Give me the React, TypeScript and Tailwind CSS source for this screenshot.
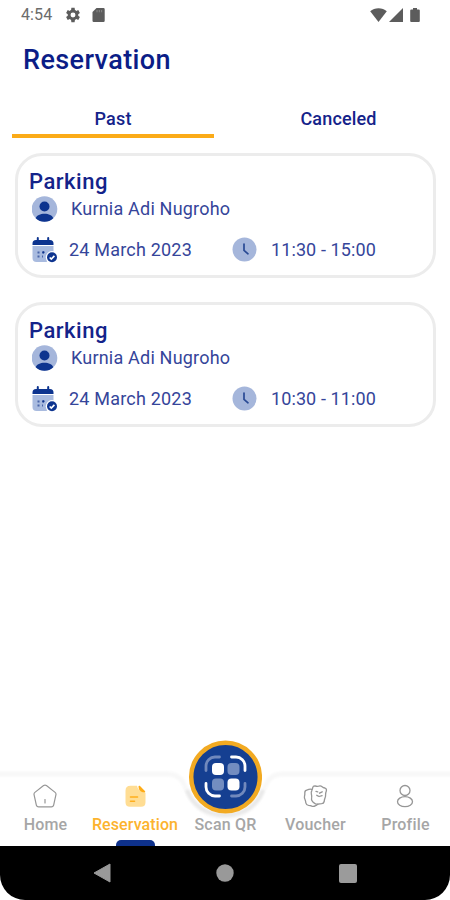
import type { ReactNode } from 'react';

interface Booking {
  id: number;
  title: string;
  name: string;
  date: string;
  time: string;
}

const bookings: Booking[] = [
  { id: 1, title: 'Parking', name: 'Kurnia Adi Nugroho', date: '24 March 2023', time: '11:30 - 15:00' },
  { id: 2, title: 'Parking', name: 'Kurnia Adi Nugroho', date: '24 March 2023', time: '10:30 - 11:00' },
];

function StatusBar() {
  return (
    <div className="flex h-[30px] items-center pl-[21px] pr-[30px] text-[#5c5c5c]">
      <span className="w-[44px] text-[16px] leading-[30px] tracking-[0.1px] text-[#6c6c6c]">4:54</span>
      <svg width="16" height="16" viewBox="2.900 2 20 20" fill="currentColor">
        <path
          fillRule="evenodd"
          d="M19.400 13a7.500 7.500 0 0 0 0-2l2.100-1.600-2-3.500-2.500 1a7.300 7.300 0 0 0-1.700-1L14.900 2.800h-4l-.4 3.100a7.300 7.300 0 0 0-1.700 1l-2.500-1-2 3.500L6.400 11a7.500 7.500 0 0 0 0 2l-2.100 1.600 2 3.500 2.500-1a7.300 7.300 0 0 0 1.700 1l.4 3.100h4l.4-3.100a7.300 7.300 0 0 0 1.700-1l2.500 1 2-3.500zM12.900 15.100a3.100 3.100 0 1 1 0-6.200 3.100 3.100 0 0 1 0 6.200z"
        />
      </svg>
      <svg className="ml-[11px]" width="13" height="14" viewBox="0 0 13 14" fill="currentColor">
        <path d="M4.500 0H11.500A1.200 1.200 0 0 1 12.700 1.200V12.800A1.200 1.200 0 0 1 11.500 14H1.700A1.200 1.200 0 0 1 .5 12.800V4z" />
        <path d="M5 2v2.300M7.300 2v2.300M9.600 2v2.300" stroke="#888" strokeWidth="1" />
      </svg>
      <div className="ml-auto flex items-center">
        <svg width="17" height="14" viewBox="0 0 17 14" fill="currentColor">
          <path d="M8.500 14 .2 3.300C2.500 1.400 5.300.3 8.500.3s6 1.100 8.300 3z" />
        </svg>
        <svg className="ml-[2px]" width="14" height="14" viewBox="0 0 14 14" fill="currentColor">
          <path d="M14 0v14H0z" />
        </svg>
        <svg className="ml-[7px]" width="10" height="14" viewBox="0 0 10 14" fill="currentColor">
          <path d="M3 0h4v1.500h1.800a1 1 0 0 1 1 1V13a1 1 0 0 1-1 1H1.200a1 1 0 0 1-1-1V2.500a1 1 0 0 1 1-1H3z" />
        </svg>
      </div>
    </div>
  );
}

function PersonIcon() {
  return (
    <svg width="26" height="26" viewBox="0 0 26 26">
      <circle cx="12.500" cy="13" r="12.800" fill="#a5b6db" />
      <circle cx="12.500" cy="10.500" r="5" fill="#0d348f" />
      <path d="M3.700 22.300C4.700 19.200 8.300 17.700 12.500 17.700s7.800 1.500 8.800 4.600a12.800 12.800 0 0 1-17.600 0z" fill="#0d348f" />
    </svg>
  );
}

function CalendarIcon() {
  return (
    <svg width="26" height="27" viewBox="0 0 26 27">
      <path d="M.5 10h21v9l-7 7h-10a4 4 0 0 1-4-4z" fill="#a9bbdf" />
      <path d="M.5 9V7.500A3.500 3.500 0 0 1 4 4h14a3.500 3.500 0 0 1 3.500 3.500V9z" fill="#0d348f" />
      <path d="M5.800 2v4M16.200 2v4" stroke="#0d348f" strokeWidth="2" strokeLinecap="round" />
      <path d="M5.500 16.500h2M10 16.500h2M5.500 20.500h2M10 20.500h1" stroke="#4964a8" strokeWidth="1.800" />
      <circle cx="11.500" cy="16.300" r="1.100" fill="#0d348f" />
      <circle cx="20" cy="21.300" r="6.200" fill="#fff" />
      <circle cx="20" cy="21.300" r="5" fill="#0d348f" />
      <path d="m17.700 21.500 1.600 1.500 3.100-3.100" fill="none" stroke="#fff" strokeWidth="1.700" />
    </svg>
  );
}

function ClockIcon() {
  return (
    <svg className="mt-[1px]" width="25" height="25" viewBox="0 0 25 25">
      <circle cx="12.500" cy="12.500" r="12" fill="#a5b6db" />
      <path d="M12 7v6.300l4 3.500" fill="none" stroke="#284994" strokeWidth="1.700" strokeLinecap="round" />
    </svg>
  );
}

function BookingCard({ booking }: { booking: Booking }) {
  return (
    <div className="h-[125px] rounded-[27px] border-[3px] border-[#ececec] bg-white pl-[11px] pt-[12px] text-[#35459a]">
      <h2 className="text-[22px] font-medium leading-[27px] tracking-[0.5px] text-[#14238a]">{booking.title}</h2>
      <div className="flex h-[27px] items-center pl-[3px]">
        <PersonIcon />
        <span className="ml-[13px] text-[18px] tracking-[0.2px]">{booking.name}</span>
      </div>
      <div className="mt-[13px] flex h-[28px] items-center pl-[3px]">
        <CalendarIcon />
        <span className="ml-[11px] w-[163px] text-[18px] tracking-[0.2px]">{booking.date}</span>
        <ClockIcon />
        <span className="ml-[14px] text-[18px] tracking-[0.1px]">{booking.time}</span>
      </div>
    </div>
  );
}

function HomeIcon() {
  return (
    <svg width="26" height="26" viewBox="0 0 26 26" fill="none" stroke="#969696" strokeWidth="1.200" strokeLinejoin="round" strokeLinecap="round">
      <path d="M11.600 1.500q1.400-.9 2.800 0l8.700 6.900q1.200 1 .8 2.500l-2.300 10.400q-.5 1.600-2.200 1.600H6.600q-1.700 0-2.200-1.600L2.100 10.900q-.4-1.500.8-2.500z" />
      <path d="M13 15.500v3.500" />
    </svg>
  );
}

function NoteIcon() {
  return (
    <svg width="26" height="26" viewBox="0 0 26 26">
      <path d="M8.500 1.800h6.500q.8 5.800 8.500 7V18.300q0 4.500-4.500 4.500H8Q3.500 22.800 3.500 18.300V6.800q0-5 5-5z" fill="#ffdd94" />
      <path d="M16.500 2.500c0-.9.9-1.100 1.500-.5l4.900 5c.7.700.3 1.500-.6 1.400-3.300-.1-5.800-2-5.800-5.900z" fill="#ffac16" />
      <path d="M8.500 13h7M8.500 17.200h4" stroke="#ffae1c" strokeWidth="1.600" strokeLinecap="round" />
    </svg>
  );
}

function VoucherIcon() {
  return (
    <svg width="26" height="26" viewBox="0 0 26 26" fill="none" stroke="#969696" strokeWidth="1.300" strokeLinejoin="round" strokeLinecap="round">
      <path d="M13 1.800q1.800.8 3.700.4 1.900-.7 3.400.5 1.200 1 2.800 1.300 1.900.7 1.500 2.800-.8 1.900-.8 3.800.1 1.900-.6 3.500-.7 1.800-.8 3.400-.4 2-2.600 2.100-1.900 0-3.500.5-1.800.4-3.300-.7-1.500-.8-2.400-2.100-1.300-1.600-.8-3.400.3-1.900-.2-3.600-.6-2 .4-3.700.7-1.600.9-3 .4-1.900 2.300-1.800z" />
      <path d="M9.600 5.300q-2.300-.4-4.200.6-2.600.4-2.600 2.800.2 1.800-.3 3.400-.4 1.800.5 3.400.7 1.700.8 3.300.6 2.400 2.800 2.500 1.800 0 3.200.8 1.800.7 3.300-.2 1.600-.6 2.800-1.800" />
      <path d="m14 7.400 1.700.4M14.800 11.300l2.300 1.200 3-.9M17.500 9.200l2.700-1.400" />
    </svg>
  );
}

function ProfileIcon() {
  return (
    <svg width="26" height="26" viewBox="0 0 26 26" fill="none" stroke="#969696" strokeWidth="1.300">
      <circle cx="13" cy="6.500" r="5" />
      <ellipse cx="13" cy="17.700" rx="7.500" ry="5" />
    </svg>
  );
}

function NavItem({ icon, label, active }: { icon?: ReactNode; label: string; active?: boolean }) {
  return (
    <div className="relative flex w-[90px] flex-col items-center">
      <div className="mt-[12px] h-[26px]">{icon}</div>
      <span
        className={`mt-[4px] text-[16px] font-medium leading-[22px] whitespace-nowrap ${
          active ? 'tracking-[0.1px] text-[#fcb32e]' : 'pl-[1px] tracking-[0.2px] text-[#a6a6a6]'
        }`}
      >
        {label}
      </span>
      {active && <div className="ml-[1px] mt-auto h-[6px] w-[39px] rounded-t-[5px] bg-[#0e318b]" />}
    </div>
  );
}

function ScanButton() {
  return (
    <svg className="absolute left-[188px] top-[-32px]" width="74" height="74" viewBox="0 0 74 74" fill="none">
      <circle cx="37.500" cy="37" r="34.300" fill="#153f91" stroke="#f2aa22" strokeWidth="4.500" />
      <rect x="24" y="23" width="12" height="12" rx="4" fill="#fff" />
      <rect x="39.500" y="23" width="12" height="12" rx="4" fill="#738dc0" />
      <rect x="24" y="38.500" width="12" height="12" rx="4" fill="#738dc0" />
      <rect x="39.500" y="38.500" width="12" height="12" rx="4" fill="#fff" />
      <g strokeWidth="2.800" strokeLinecap="round">
        <path d="M18 30.500V26a9 9 0 0 1 9-9h4.500" stroke="#7189bd" />
        <path d="M43.500 17H48a9 9 0 0 1 9 9v4.500" stroke="#fff" />
        <path d="M18 43.500V47a9 9 0 0 0 9 9h4.500" stroke="#fff" />
        <path d="M57 43.500V47a9 9 0 0 1-9 9h-4.500" stroke="#7189bd" />
      </g>
    </svg>
  );
}

function BottomNav() {
  return (
    <nav className="relative flex h-[74px]">
      {/* bar outline with the notch that holds the scan button */}
      <svg className="absolute left-0 top-[-2px]" width="450" height="76" viewBox="0 0 450 76">
        <defs>
          <filter id="soft" x="-5%" y="-20%" width="110%" height="140%">
            <feGaussianBlur stdDeviation="1.200" />
          </filter>
        </defs>
        <path
          d="M-5 4H168Q179 4 184 14C191 33 204 47 225 47S259 33 266 14Q271 4 282 4H455"
          fill="none"
          stroke="#f8f8f8"
          strokeWidth="5"
          filter="url(#soft)"
        />
        <path d="M187 20C193 36 207 45 225 45S257 36 263 20" fill="none" stroke="#e9e9e9" strokeWidth="4" filter="url(#soft)" />
      </svg>
      <NavItem icon={<HomeIcon />} label="Home" />
      <NavItem icon={<NoteIcon />} label="Reservation" active />
      <NavItem label="Scan QR" />
      <NavItem icon={<VoucherIcon />} label="Voucher" />
      <NavItem icon={<ProfileIcon />} label="Profile" />
      <ScanButton />
    </nav>
  );
}

function SystemBar() {
  return (
    <div className="flex h-[54px] items-center justify-between rounded-b-[25px] bg-black pl-[93px] pr-[93px]">
      <svg width="18" height="20" viewBox="0 0 18 20">
        <path d="M17 1v18L1 10z" fill="#999" stroke="#999" strokeLinejoin="round" />
      </svg>
      <svg width="18" height="18" viewBox="0 0 18 18">
        <circle cx="9" cy="9" r="8.700" fill="#999" />
      </svg>
      <div className="h-[19px] w-[18px] rounded-[2px] bg-[#9b9b9b]" />
    </div>
  );
}

export default function App() {
  return (
    <div className="flex h-[900px] w-[450px] flex-col overflow-hidden bg-white font-['Roboto',sans-serif]">
      <StatusBar />
      <h1 className="mt-[13px] pl-[23px] text-[27px] font-medium leading-[34px] tracking-[0.4px] text-[#0b1d87]">Reservation</h1>
      <div className="mt-[25px] flex h-[36px] pl-[12px] pr-[10px] text-center text-[18px] font-medium leading-[33px] text-[#14238a]">
        <div className="w-[202px] border-b-4 border-[#fbab18] tracking-[0.2px]">Past</div>
        <div className="ml-[23px] w-[203px] tracking-[0.15px]">Canceled</div>
      </div>
      <main className="mt-[15px] flex flex-1 flex-col gap-[24px] pl-[15px] pr-[14px]">
        {bookings.map((booking) => (
          <BookingCard key={booking.id} booking={booking} />
        ))}
      </main>
      <BottomNav />
      <SystemBar />
    </div>
  );
}
